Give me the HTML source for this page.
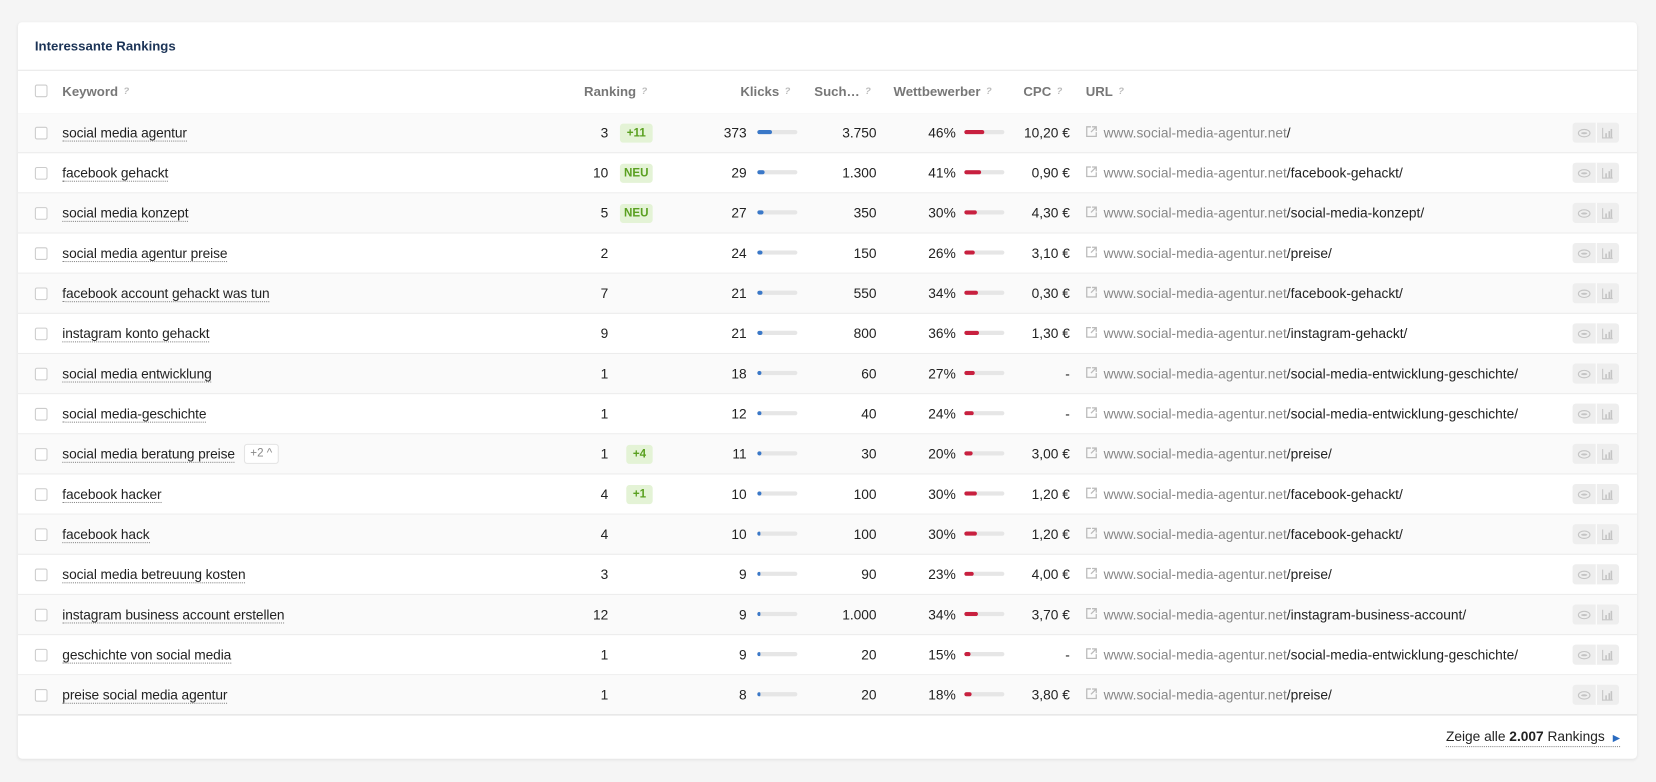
<!DOCTYPE html>
<html><head><meta charset="utf-8"><style>
html,body{margin:0;padding:0;background:#f5f5f5;overflow:hidden}
#w{width:1568px;height:740px;transform:scale(1.05612,1.05676);transform-origin:0 0;position:relative;font-family:"Liberation Sans",sans-serif;font-size:13px;color:#222}
.card{position:absolute;left:17px;top:21px;width:1533px;height:697px;background:#fff;border-radius:4px;box-shadow:0 1px 3px rgba(0,0,0,.08)}
.title{position:absolute;left:16px;top:16px;font-weight:bold;font-size:12.5px;color:#1b3356}
.hdr{position:absolute;left:0;top:45px;width:1533px;height:40px;border-top:1px solid #e8e8e8;border-bottom:1px solid #e2e2e2;font-weight:bold;color:#777;font-size:12.5px}
.hdr span{position:absolute;top:13px}
.q{color:#bbb;font-size:9px;margin-left:5px;vertical-align:2px}
.row{position:absolute;left:0;width:1533px;height:37px;border-bottom:1px solid #ececec}
.row:nth-child(odd){background:#fafafa}
.row>*{position:absolute;top:11px}
.cb{left:16px;top:13px!important;width:10px;height:10px;border:1px solid #ccc;border-radius:2px;background:#fff}
.hdr .cb{top:14px}
.kw{left:42px;border-bottom:1px dotted #888;line-height:15px;letter-spacing:-0.1px}
.r{text-align:right}
.rk{left:480px;width:79px}
.bd{left:570px;top:10px!important;width:31px;height:18px;background:#e4f3d6;color:#5aa020;font-weight:bold;font-size:11px;text-align:center;line-height:18px;border-radius:3px}
.bd.s{left:576px;width:25px}
.kl{left:620px;width:70px}
.bar{top:16px!important;width:38px;height:4px;background:#e6e6e6;border-radius:2px;overflow:hidden}
.bar i{display:block;height:4px;border-radius:2px}
.bb{left:700px}.bb i{background:#3a78c8}
.rb{left:896px}.rb i{background:#c8203f}
.sv{left:730px;width:83px}
.cp{left:830px;width:58px}
.cc{left:920px;width:76px}
.ul{left:1028px;color:#888}
.ul b{font-weight:normal;color:#222}
.ex{left:1011px;top:12px!important}
.ic{left:1472px;top:9px!important;width:44px;height:19px;background:#eee;border-radius:3px}
.ic:after{content:"";position:absolute;left:22px;top:0;width:1px;height:19px;background:#fff}
.ic:before{content:"";position:absolute;left:5px;top:6px;width:10px;height:6px;border:1.5px solid #c4c4c4;border-radius:50%;box-sizing:border-box;width:12px;height:8px;box-shadow:inset 0 0 0 2px #eee, inset 0 0 0 4px #c4c4c4}
.ic i{position:absolute;left:28px;top:5px;width:9px;height:9px;border-left:1px solid #c4c4c4;border-bottom:1px solid #c4c4c4;background:linear-gradient(#c4c4c4,#c4c4c4) 2px 5px/1.5px 4px no-repeat,linear-gradient(#c4c4c4,#c4c4c4) 4.5px 3px/1.5px 6px no-repeat,linear-gradient(#c4c4c4,#c4c4c4) 7px 1px/1.5px 8px no-repeat}
.foot{position:absolute;right:16px;top:668px;font-size:13px;border-bottom:1px dotted #888;line-height:15px}
</style></head><body><div id="w"><div class="card">
<div class="title">Interessante Rankings</div>
<div class="hdr"><div class="cb" style="position:absolute;left:16px"></div>
<span style="left:42px">Keyword<i class="q">?</i></span>
<span style="left:536px">Ranking<i class="q">?</i></span>
<span style="left:684px">Klicks<i class="q">?</i></span>
<span style="left:754px">Such…<i class="q">?</i></span>
<span style="left:829px">Wettbewerber<i class="q">?</i></span>
<span style="left:952px">CPC<i class="q">?</i></span>
<span style="left:1011px">URL<i class="q">?</i></span>
</div>
<div style="position:absolute;top:86px;left:0">
<div class="row" style="top:0"><div class="cb"></div><span class="kw">social media agentur</span><span class="rk r">3</span><span class="bd">+11</span><span class="kl r">373</span><div class="bar bb"><i style="width:14px"></i></div><span class="sv r">3.750</span><span class="cp r">46%</span><div class="bar rb"><i style="width:19px"></i></div><span class="cc r">10,20 €</span><svg class="ex" width="11" height="11" viewBox="0 0 11 11" fill="none" stroke="#bbb" stroke-width="1.2"><path d="M5 1H1v9h9V6M6 1h4v4M10 1L5 6"/></svg><span class="ul">www.social-media-agentur.net<b>/</b></span><div class="ic"><i></i></div></div>
<div class="row" style="top:38px"><div class="cb"></div><span class="kw">facebook gehackt</span><span class="rk r">10</span><span class="bd">NEU</span><span class="kl r">29</span><div class="bar bb"><i style="width:7px"></i></div><span class="sv r">1.300</span><span class="cp r">41%</span><div class="bar rb"><i style="width:16px"></i></div><span class="cc r">0,90 €</span><svg class="ex" width="11" height="11" viewBox="0 0 11 11" fill="none" stroke="#bbb" stroke-width="1.2"><path d="M5 1H1v9h9V6M6 1h4v4M10 1L5 6"/></svg><span class="ul">www.social-media-agentur.net<b>/facebook-gehackt/</b></span><div class="ic"><i></i></div></div>
<div class="row" style="top:76px"><div class="cb"></div><span class="kw">social media konzept</span><span class="rk r">5</span><span class="bd">NEU</span><span class="kl r">27</span><div class="bar bb"><i style="width:6px"></i></div><span class="sv r">350</span><span class="cp r">30%</span><div class="bar rb"><i style="width:12px"></i></div><span class="cc r">4,30 €</span><svg class="ex" width="11" height="11" viewBox="0 0 11 11" fill="none" stroke="#bbb" stroke-width="1.2"><path d="M5 1H1v9h9V6M6 1h4v4M10 1L5 6"/></svg><span class="ul">www.social-media-agentur.net<b>/social-media-konzept/</b></span><div class="ic"><i></i></div></div>
<div class="row" style="top:114px"><div class="cb"></div><span class="kw">social media agentur preise</span><span class="rk r">2</span><span class="kl r">24</span><div class="bar bb"><i style="width:5px"></i></div><span class="sv r">150</span><span class="cp r">26%</span><div class="bar rb"><i style="width:10px"></i></div><span class="cc r">3,10 €</span><svg class="ex" width="11" height="11" viewBox="0 0 11 11" fill="none" stroke="#bbb" stroke-width="1.2"><path d="M5 1H1v9h9V6M6 1h4v4M10 1L5 6"/></svg><span class="ul">www.social-media-agentur.net<b>/preise/</b></span><div class="ic"><i></i></div></div>
<div class="row" style="top:152px"><div class="cb"></div><span class="kw">facebook account gehackt was tun</span><span class="rk r">7</span><span class="kl r">21</span><div class="bar bb"><i style="width:5px"></i></div><span class="sv r">550</span><span class="cp r">34%</span><div class="bar rb"><i style="width:13px"></i></div><span class="cc r">0,30 €</span><svg class="ex" width="11" height="11" viewBox="0 0 11 11" fill="none" stroke="#bbb" stroke-width="1.2"><path d="M5 1H1v9h9V6M6 1h4v4M10 1L5 6"/></svg><span class="ul">www.social-media-agentur.net<b>/facebook-gehackt/</b></span><div class="ic"><i></i></div></div>
<div class="row" style="top:190px"><div class="cb"></div><span class="kw">instagram konto gehackt</span><span class="rk r">9</span><span class="kl r">21</span><div class="bar bb"><i style="width:5px"></i></div><span class="sv r">800</span><span class="cp r">36%</span><div class="bar rb"><i style="width:14px"></i></div><span class="cc r">1,30 €</span><svg class="ex" width="11" height="11" viewBox="0 0 11 11" fill="none" stroke="#bbb" stroke-width="1.2"><path d="M5 1H1v9h9V6M6 1h4v4M10 1L5 6"/></svg><span class="ul">www.social-media-agentur.net<b>/instagram-gehackt/</b></span><div class="ic"><i></i></div></div>
<div class="row" style="top:228px"><div class="cb"></div><span class="kw">social media entwicklung</span><span class="rk r">1</span><span class="kl r">18</span><div class="bar bb"><i style="width:4px"></i></div><span class="sv r">60</span><span class="cp r">27%</span><div class="bar rb"><i style="width:10px"></i></div><span class="cc r">-</span><svg class="ex" width="11" height="11" viewBox="0 0 11 11" fill="none" stroke="#bbb" stroke-width="1.2"><path d="M5 1H1v9h9V6M6 1h4v4M10 1L5 6"/></svg><span class="ul">www.social-media-agentur.net<b>/social-media-entwicklung-geschichte/</b></span><div class="ic"><i></i></div></div>
<div class="row" style="top:266px"><div class="cb"></div><span class="kw">social media-geschichte</span><span class="rk r">1</span><span class="kl r">12</span><div class="bar bb"><i style="width:4px"></i></div><span class="sv r">40</span><span class="cp r">24%</span><div class="bar rb"><i style="width:9px"></i></div><span class="cc r">-</span><svg class="ex" width="11" height="11" viewBox="0 0 11 11" fill="none" stroke="#bbb" stroke-width="1.2"><path d="M5 1H1v9h9V6M6 1h4v4M10 1L5 6"/></svg><span class="ul">www.social-media-agentur.net<b>/social-media-entwicklung-geschichte/</b></span><div class="ic"><i></i></div></div>
<div class="row" style="top:304px"><div class="cb"></div><span class="kw">social media beratung preise</span><span style="left:214px;top:9px;height:17px;line-height:17px;padding:0 5px;border:1px solid #e4e4e4;border-radius:3px;font-size:11px;color:#888;background:#fff">+2 ^</span><span class="rk r">1</span><span class="bd s">+4</span><span class="kl r">11</span><div class="bar bb"><i style="width:4px"></i></div><span class="sv r">30</span><span class="cp r">20%</span><div class="bar rb"><i style="width:8px"></i></div><span class="cc r">3,00 €</span><svg class="ex" width="11" height="11" viewBox="0 0 11 11" fill="none" stroke="#bbb" stroke-width="1.2"><path d="M5 1H1v9h9V6M6 1h4v4M10 1L5 6"/></svg><span class="ul">www.social-media-agentur.net<b>/preise/</b></span><div class="ic"><i></i></div></div>
<div class="row" style="top:342px"><div class="cb"></div><span class="kw">facebook hacker</span><span class="rk r">4</span><span class="bd s">+1</span><span class="kl r">10</span><div class="bar bb"><i style="width:4px"></i></div><span class="sv r">100</span><span class="cp r">30%</span><div class="bar rb"><i style="width:12px"></i></div><span class="cc r">1,20 €</span><svg class="ex" width="11" height="11" viewBox="0 0 11 11" fill="none" stroke="#bbb" stroke-width="1.2"><path d="M5 1H1v9h9V6M6 1h4v4M10 1L5 6"/></svg><span class="ul">www.social-media-agentur.net<b>/facebook-gehackt/</b></span><div class="ic"><i></i></div></div>
<div class="row" style="top:380px"><div class="cb"></div><span class="kw">facebook hack</span><span class="rk r">4</span><span class="kl r">10</span><div class="bar bb"><i style="width:3px"></i></div><span class="sv r">100</span><span class="cp r">30%</span><div class="bar rb"><i style="width:12px"></i></div><span class="cc r">1,20 €</span><svg class="ex" width="11" height="11" viewBox="0 0 11 11" fill="none" stroke="#bbb" stroke-width="1.2"><path d="M5 1H1v9h9V6M6 1h4v4M10 1L5 6"/></svg><span class="ul">www.social-media-agentur.net<b>/facebook-gehackt/</b></span><div class="ic"><i></i></div></div>
<div class="row" style="top:418px"><div class="cb"></div><span class="kw">social media betreuung kosten</span><span class="rk r">3</span><span class="kl r">9</span><div class="bar bb"><i style="width:3px"></i></div><span class="sv r">90</span><span class="cp r">23%</span><div class="bar rb"><i style="width:9px"></i></div><span class="cc r">4,00 €</span><svg class="ex" width="11" height="11" viewBox="0 0 11 11" fill="none" stroke="#bbb" stroke-width="1.2"><path d="M5 1H1v9h9V6M6 1h4v4M10 1L5 6"/></svg><span class="ul">www.social-media-agentur.net<b>/preise/</b></span><div class="ic"><i></i></div></div>
<div class="row" style="top:456px"><div class="cb"></div><span class="kw">instagram business account erstellen</span><span class="rk r">12</span><span class="kl r">9</span><div class="bar bb"><i style="width:3px"></i></div><span class="sv r">1.000</span><span class="cp r">34%</span><div class="bar rb"><i style="width:13px"></i></div><span class="cc r">3,70 €</span><svg class="ex" width="11" height="11" viewBox="0 0 11 11" fill="none" stroke="#bbb" stroke-width="1.2"><path d="M5 1H1v9h9V6M6 1h4v4M10 1L5 6"/></svg><span class="ul">www.social-media-agentur.net<b>/instagram-business-account/</b></span><div class="ic"><i></i></div></div>
<div class="row" style="top:494px"><div class="cb"></div><span class="kw">geschichte von social media</span><span class="rk r">1</span><span class="kl r">9</span><div class="bar bb"><i style="width:3px"></i></div><span class="sv r">20</span><span class="cp r">15%</span><div class="bar rb"><i style="width:6px"></i></div><span class="cc r">-</span><svg class="ex" width="11" height="11" viewBox="0 0 11 11" fill="none" stroke="#bbb" stroke-width="1.2"><path d="M5 1H1v9h9V6M6 1h4v4M10 1L5 6"/></svg><span class="ul">www.social-media-agentur.net<b>/social-media-entwicklung-geschichte/</b></span><div class="ic"><i></i></div></div>
<div class="row" style="top:532px;border-bottom-color:#ddd"><div class="cb"></div><span class="kw">preise social media agentur</span><span class="rk r">1</span><span class="kl r">8</span><div class="bar bb"><i style="width:3px"></i></div><span class="sv r">20</span><span class="cp r">18%</span><div class="bar rb"><i style="width:7px"></i></div><span class="cc r">3,80 €</span><svg class="ex" width="11" height="11" viewBox="0 0 11 11" fill="none" stroke="#bbb" stroke-width="1.2"><path d="M5 1H1v9h9V6M6 1h4v4M10 1L5 6"/></svg><span class="ul">www.social-media-agentur.net<b>/preise/</b></span><div class="ic"><i></i></div></div>
</div>
<div class="foot">Zeige alle <b>2.007</b> Rankings <span style="color:#2a6bc0;font-size:9px;margin-left:4px">&#9654;</span></div>
</div></div></body></html>
